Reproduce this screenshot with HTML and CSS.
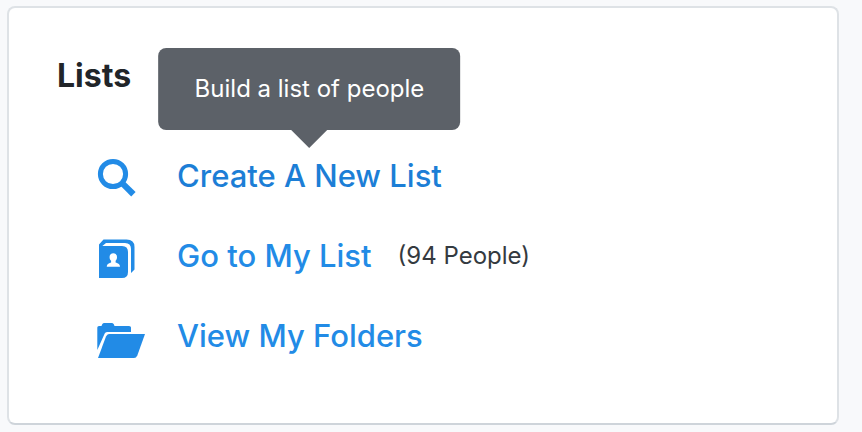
FILE: index.html
```html
<!DOCTYPE html>
<html lang="en">
<head>
<meta charset="utf-8">
<meta name="viewport" content="width=device-width, initial-scale=1">
<title>Lists</title>
<link rel="stylesheet" href="styles.css">
</head>
<body>
<main class="card">
  <h2 class="card-title">Lists</h2>
  <ul class="links">
    <li class="row">
      <svg class="icon" viewBox="0 1 48 44" aria-hidden="true"><circle cx="16" cy="17" r="12.6" fill="none" stroke="currentColor" stroke-width="5"/><path d="M22.8 28L27 23.8L38.6 35L34.2 39.6Z"/></svg>
      <span class="anchor">
        <a class="link link-active" href="#create" aria-describedby="tip">Create A New List</a>
        <span class="tooltip" id="tip" role="tooltip">Build a list of people</span>
      </span>
    </li>
    <li class="row">
      <svg class="icon" viewBox="0 0 48 44" aria-hidden="true"><path d="M6.5 1.5H29.5Q37.5 1.5 37.5 9V31.5L34 35V11Q34 5 28 5H9L5.3 8H25Q31 8 31 14V34Q31 40 25 40H2V6.5Z"/><path fill="#fff" d="M16.3 15.2C18.8 15.2 20.1 16.9 20 19.4C19.9 21.1 19.2 22 18.6 22.8V24.4C20.5 25.3 23 25.4 23 28.8H9.8C9.8 25.4 12.3 25.3 14.1 24.4V22.8C13.3 22 12.7 21.1 12.6 19.4C12.5 16.9 13.8 15.2 16.3 15.2Z"/></svg>
      <a class="link" href="#list">Go to My List</a>
      <span class="count">(94 People)</span>
    </li>
    <li class="row">
      <svg class="icon" viewBox="0 -2 48 44" aria-hidden="true"><path d="M0.3 30V7.5Q0.3 6 2 6H4.5L5.2 4.2Q6 3 7.3 3H14.7Q16 3 16.8 4.2L17.5 6H32Q34 6 34 7.5V12H10Q8.3 12 7.7 13.5Z"/><path d="M1 38L9 16.5Q10 14 12 14H48L40.3 35.5Q39.2 38 37 38Z"/></svg>
      <a class="link" href="#folders">View My Folders</a>
    </li>
  </ul>
</main>
</body>
</html>
```

FILE: styles.css
```css
* {
  box-sizing: border-box;
}

body {
  margin: 0;
  padding: 6px 23px 7px 7px;
  background: #f8f9fb;
  color: #212529;
  font-family: Inter, "Liberation Sans", sans-serif;
}

.card {
  padding: 48px 48px 67px;
  background: #fff;
  border: 2px solid #dee2e6;
  border-bottom-color: #ced4da;
  border-radius: 8px;
}

.card-title {
  margin: 0 0 60px;
  font-size: 32px;
  font-weight: 700;
  line-height: 40px;
}

.links {
  display: grid;
  gap: 40px;
  margin: 0;
  padding: 0 0 0 40px;
  list-style: none;
}

.row {
  display: flex;
  align-items: center;
  height: 40px;
}

.icon {
  flex: none;
  width: 48px;
  height: 44px;
  margin-top: 8px;
  margin-right: 32px;
  color: #228be6;
  fill: currentColor;
}

.anchor {
  position: relative;
}

.link {
  color: #228be6;
  font-size: 31px;
  font-weight: 500;
  line-height: 40px;
  text-decoration: none;
}

.link-active {
  color: #1c7ed6;
}

.count {
  margin-left: 26px;
  color: #343a40;
  font-size: 24px;
  line-height: 40px;
}

.tooltip {
  position: absolute;
  bottom: 100%;
  left: 50%;
  margin-bottom: 26px;
  padding: 24px 36px;
  transform: translateX(-50%);
  border-radius: 8px;
  background: #5c6168;
  color: #fff;
  font-size: 24px;
  line-height: 34px;
  white-space: nowrap;
}

.tooltip::after {
  content: "";
  position: absolute;
  top: 100%;
  left: 50%;
  margin-left: -18px;
  border: 18px solid transparent;
  border-top-color: #5c6168;
  border-bottom: 0;
}
```
